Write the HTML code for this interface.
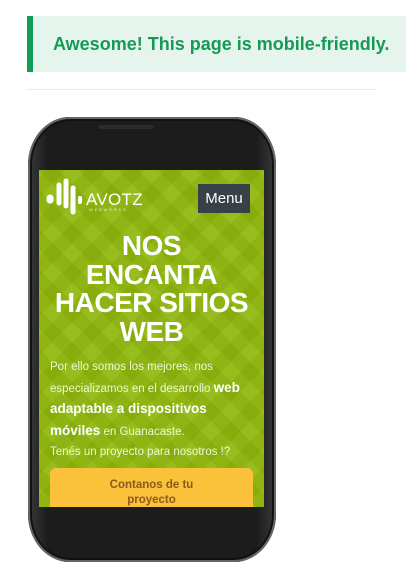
<!DOCTYPE html>
<html><head><meta charset="utf-8"><style>
body{margin:0;width:406px;height:575px;background:#fff;position:relative;overflow:hidden;font-family:"Liberation Sans",sans-serif}
.banner{position:absolute;left:27px;top:16px;width:379px;height:56px;background:#e5f4ec;border-left:6px solid #0f9d58;box-sizing:border-box}
.banner span{position:absolute;left:20px;top:18px;font-weight:bold;font-size:18px;color:#169a55;white-space:nowrap}
.hr{position:absolute;left:27px;top:89px;width:348px;height:1px;background:#e8e8e8}
.phone{position:absolute;left:28px;top:117px;width:248px;height:445px;border-radius:42px/48px;background:linear-gradient(90deg,#3a3a3a,#1c1c1c 8%,#1c1c1c 92%,#3a3a3a);box-shadow:inset 0 0 0 2px #666,inset 0 0 0 4px #111}
.speaker{position:absolute;left:98px;top:125px;width:56px;height:4px;background:#2b2b2b;border-radius:2px}
.screen{position:absolute;left:39px;top:170px;width:225px;height:337px;overflow:hidden;background:#8fb70b;background-image:repeating-linear-gradient(45deg,rgba(255,255,255,.04) 0 14px,rgba(0,0,0,.03) 14px 28px),repeating-linear-gradient(-45deg,rgba(255,255,255,.04) 0 14px,rgba(0,0,0,.03) 14px 28px)}
.menu{position:absolute;left:159px;top:14px;width:52px;height:29px;background:#3a4048;color:#fff;font-size:15px;line-height:29px;text-align:center}
.h{position:absolute;left:0;top:62px;width:225px;text-align:center;color:#fff;font-weight:bold;font-size:28px;line-height:28.5px;letter-spacing:-.5px}
.p{position:absolute;left:11px;top:187px;width:210px;color:#f0f6d8;font-size:11.5px;line-height:20.5px}
.p b{color:#fff;font-size:13.5px}
.btn{position:absolute;left:11px;top:298px;width:203px;height:60px;background:#fcc13a;border-radius:6px;color:#8b5a1c;font-weight:bold;font-size:11.5px;text-align:center;line-height:15px;padding-top:10px;box-sizing:border-box}
.logo{position:absolute;left:7px;top:6px}
</style></head><body>
<div class="banner"><span>Awesome! This page is mobile-friendly.</span></div>
<div class="hr"></div>
<div class="phone"></div>
<div class="speaker"></div>
<div class="screen">
<svg class="logo" width="110" height="42" viewBox="0 0 110 42">
<g stroke="#fff" stroke-linecap="round" fill="none">
<line x1="4" y1="22" x2="4" y2="24" stroke-width="7"/>
<line x1="13" y1="9" x2="13" y2="27" stroke-width="5"/>
<line x1="20" y1="5" x2="20" y2="30" stroke-width="5"/>
<line x1="27" y1="12" x2="27" y2="36" stroke-width="5"/>
<line x1="34" y1="22" x2="34" y2="26" stroke-width="4"/>
</g>
<text x="40" y="29" fill="#fff" font-family="Liberation Sans" font-size="17" letter-spacing="0.3">AVOTZ</text>
<text x="43" y="35" fill="#e8f0c0" font-family="Liberation Sans" font-size="4" letter-spacing="1.8">WEBWORKS</text>
</svg>
<div class="menu">Menu</div>
<div class="h">NOS<br>ENCANTA<br>HACER SITIOS<br>WEB</div>
<div class="p">Por ello somos los mejores, nos especializamos en el desarrollo <b>web adaptable a dispositivos móviles</b> en Guanacaste.<br>Tenés un proyecto para nosotros !?</div>
<div class="btn">Contanos de tu<br>proyecto</div>
</div>
</body></html>
